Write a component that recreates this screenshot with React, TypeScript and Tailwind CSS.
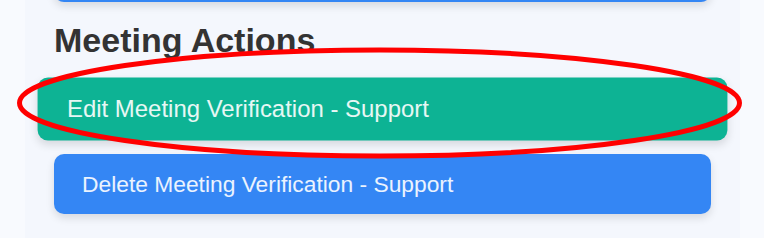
import React from 'react';

const actions = [
  { label: 'Edit Meeting Verification - Support', color: 'bg-[#0db394]', hover: true },
  { label: 'Delete Meeting Verification - Support', color: 'bg-[#3486f4]', hover: false },
];

export default function App() {
  return (
    <div className="relative h-[238px] w-[764px] overflow-hidden bg-[#f8fafe] font-['Liberation_Sans',Arial,sans-serif]">
      <div className="ml-[25px] flex h-full w-[715px] flex-col bg-[#f4f7fd] px-[29px]">
        {/* bottom of the previous section's button */}
        <div className="-mt-[58px] h-[60px] shrink-0 rounded-[10px] bg-[#3486f4] shadow-[0_4px_8px_rgba(0,0,0,0.12)]" />

        <h2 className="mt-[18px] text-[34px] font-bold leading-[40px] text-[#333333]">Meeting Actions</h2>

        <div className="mt-[19px] flex flex-col gap-[15px]">
          {actions.map((a) => (
            <button
              key={a.label}
              className={`${a.color} ${a.hover ? 'scale-105' : ''} flex h-[60px] w-full items-center rounded-[10px] px-[28px] text-left text-[22.8px] text-white/90 shadow-[0_4px_8px_rgba(0,0,0,0.12)]`}
            >
              {a.label}
            </button>
          ))}
        </div>
      </div>

      {/* red annotation ring */}
      <svg className="pointer-events-none absolute inset-0" width="764" height="238" viewBox="0 0 764 238">
        <ellipse cx="379.5" cy="103" rx="360" ry="53" fill="none" stroke="#ff0000" strokeWidth="5" />
      </svg>
    </div>
  );
}
